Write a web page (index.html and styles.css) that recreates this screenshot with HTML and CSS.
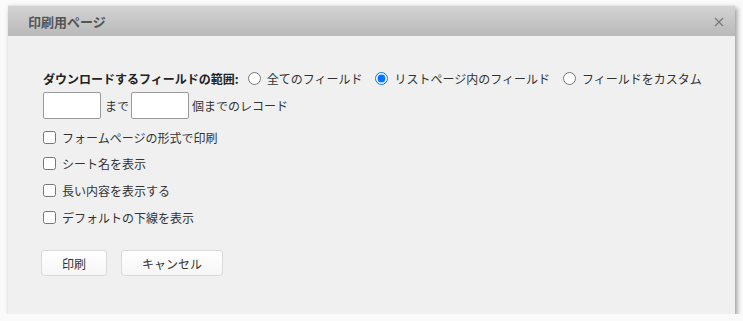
FILE: index.html
```html
<!DOCTYPE html>
<html lang="ja">
<head>
  <meta charset="UTF-8">
  <title>印刷用ページ</title>
  <link rel="stylesheet" href="styles.css">
</head>
<body>
  <div class="dialog">
    <div class="dialog-header">
      <span class="dialog-title">印刷用ページ</span>
      <span class="dialog-close">
        <svg width="10" height="10" viewBox="0 0 10 10"><path d="M1 1 L9 9 M9 1 L1 9" stroke="#777" stroke-width="1.2" fill="none"/></svg>
      </span>
    </div>

    <div class="dialog-body">
      <div class="range-row">
        <span class="range-label">ダウンロードするフィールドの範囲:</span>
        <label class="radio"><input type="radio" name="range">全てのフィールド</label>
        <label class="radio"><input type="radio" name="range" checked>リストページ内のフィールド</label>
        <label class="radio"><input type="radio" name="range">フィールドをカスタム</label>
      </div>

      <div class="records-row">
        <input type="text" class="num-input">
        <span class="until">まで</span>
        <input type="text" class="num-input">
        <span class="suffix">個までのレコード</span>
      </div>

      <label class="check"><input type="checkbox">フォームページの形式で印刷</label>
      <label class="check"><input type="checkbox">シート名を表示</label>
      <label class="check"><input type="checkbox">長い内容を表示する</label>
      <label class="check"><input type="checkbox">デフォルトの下線を表示</label>

      <div class="actions">
        <button>印刷</button>
        <button>キャンセル</button>
      </div>
    </div>
  </div>
</body>
</html>
```

FILE: styles.css
```css
body {
  margin: 0;
  padding: 5px 0 0 8px;
  background-color: #fafafa;
  font-family: "Noto Sans CJK JP", "Noto Sans", sans-serif;
  font-size: 12px;
  color: #333;
}

.dialog {
  width: 727px;
  height: 309px;
  background-color: #f0f0f0;
  box-shadow: 2px 3px 5px rgba(0, 0, 0, 0.4);
  display: flex;
  flex-direction: column;
}

.dialog-header {
  height: 31px;
  flex: none;
  display: flex;
  align-items: center;
  justify-content: space-between;
  padding: 0 11px 0 20px;
  background: linear-gradient(#d3d3d3, #b9b9b9);
  border-top: 1px solid #e6e6e6;
  box-sizing: border-box;
}

.dialog-title {
  font-size: 13px;
  font-weight: bold;
  color: #555;
}

.dialog-close {
  display: flex;
  width: 10px;
  height: 10px;
  margin-top: 1px;
}

.dialog-body {
  padding: 32px 0 0 35px;
}

.range-row {
  display: flex;
  align-items: center;
  height: 20px;
}

.range-label {
  font-weight: bold;
  color: #222;
  margin-right: 9px;
}

.radio {
  display: flex;
  align-items: center;
  margin-right: 13px;
}

.radio input {
  width: 13px;
  height: 13px;
  margin: 0 6px 0 0;
}

.records-row {
  display: flex;
  align-items: center;
  margin-top: 4px;
}

.num-input {
  width: 58px;
  height: 27px;
  box-sizing: border-box;
  margin: 0;
  border: 1px solid #9a9a9a;
  border-radius: 2px;
  background-color: #fff;
}

.until {
  margin: 0 2px 0 4px;
}

.suffix {
  margin-left: 3px;
}

.check {
  display: flex;
  align-items: center;
  height: 20px;
  margin-top: 6.7px;
}

.records-row + .check {
  margin-top: 8px;
}

.check input {
  width: 13px;
  height: 13px;
  margin: 0 6px 0 0;
}

.actions {
  display: flex;
  gap: 14px;
  margin: 23px 0 0 -2px;
}

button {
  height: 26px;
  padding: 0 20px;
  font-family: inherit;
  font-size: 12px;
  color: #333;
  background: linear-gradient(#ffffff, #f6f6f6);
  border: 1px solid #d9d9d9;
  border-radius: 3px;
}
```
